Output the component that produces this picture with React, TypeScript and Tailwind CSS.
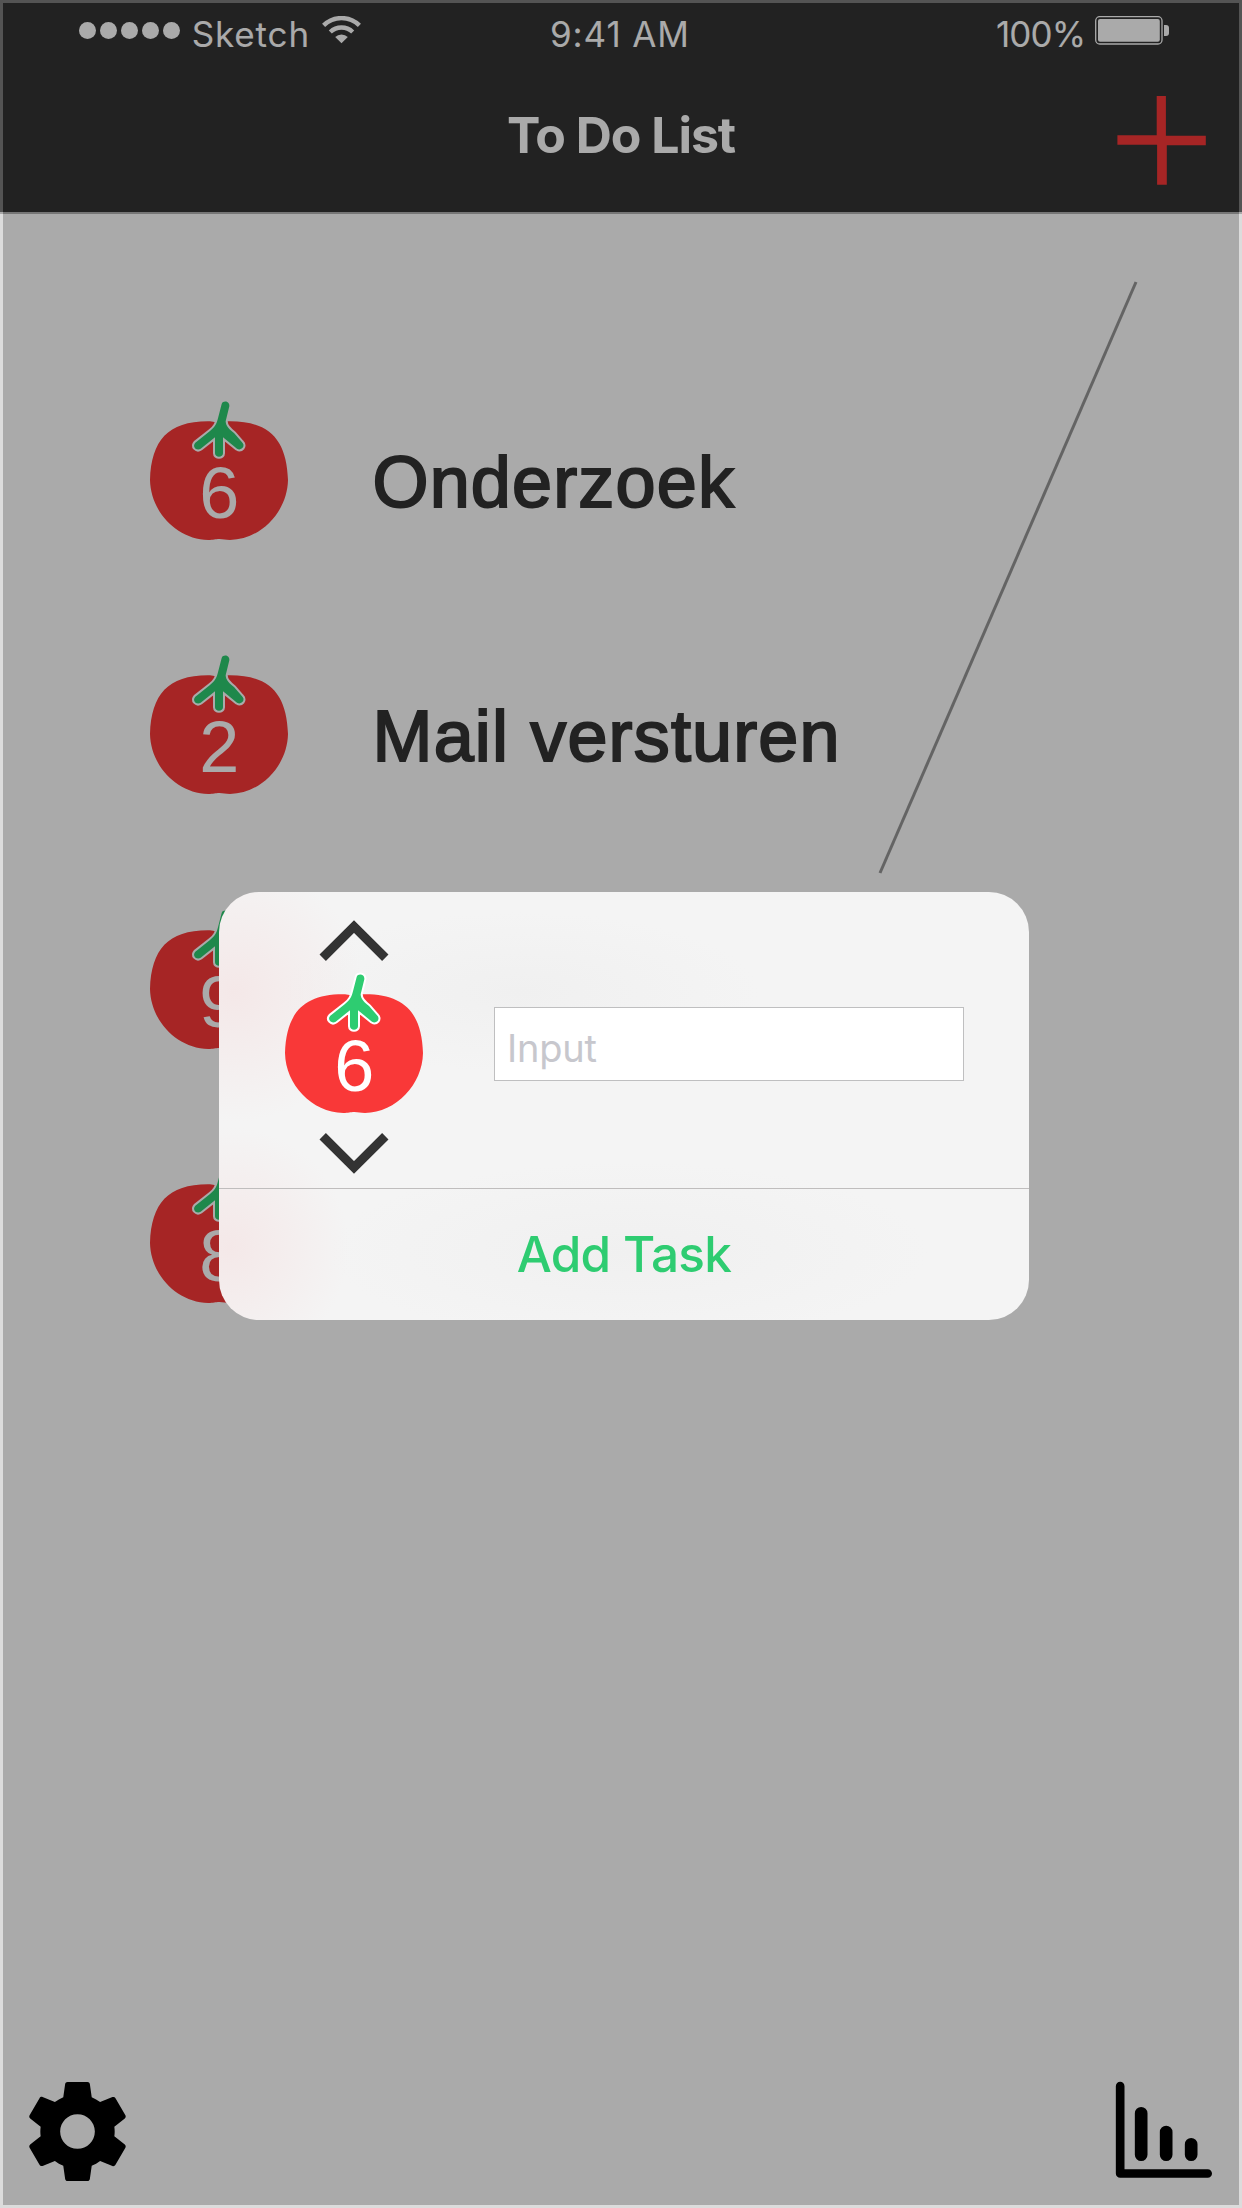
import React from "react";

const BODY =
  "M267 128 L240 124 C115 122 64 180 60 300 C62 395 140 478 235 480 C250 480 256 477 268 477 C280 477 286 480 300 480 C394 478 472 395 474 300 C470 180 419 122 294 124 Z";
const STEM =
  "M275 72 C279 60 300 63 298 79 L287 124 C287 139 300 150 312 159 L336 187 C348 198 334 214 321 206 L279 172 L279 220 C279 234 255 234 255 220 L255 172 L212 206 C200 214 185 200 196 188 L240 153 C257 140 260 130 264 115 Z";

function Tomato({ count, className = "" }: { count: number; className?: string }) {
  return (
    <svg viewBox="0 0 540 540" className={`size-[180px] shrink-0 ${className}`}>
      <path d={BODY} fill="#f93838" />
      <path d={STEM} fill="#2ecc71" stroke="#fff" strokeWidth="12" strokeLinejoin="round" className="[paint-order:stroke]" />
      <text x="268" y="414" textAnchor="middle" fontSize="216" fill="#fff" className="font-['Liberation_Sans',sans-serif]">
        {count}
      </text>
    </svg>
  );
}

function Chevron({ className = "" }: { className?: string }) {
  return (
    <svg viewBox="0 0 70 41" className={`h-[41px] w-[70px] shrink-0 ${className}`} fill="none" stroke="#333" strokeWidth="9">
      <path d="M3.7 37.8 L35 6.5 L66.3 37.8" />
    </svg>
  );
}

function StatusBar() {
  return (
    <div className="grid h-[68px] grid-cols-[550px_446px_1fr] text-[35px] leading-[68px] tracking-[0.9px] whitespace-nowrap text-white">
      <div className="flex pl-[79px]">
        <div className="mt-[22px] flex h-[17px] gap-[4.3px]">
          {[0, 1, 2, 3, 4].map((i) => (
            <span key={i} className="size-[16.7px] rounded-full bg-white" />
          ))}
        </div>
        <span className="ml-[12px]">Sketch</span>
        <svg viewBox="0 0 39 28" className="mt-[16px] ml-[12px] h-[28px] w-[39px]" fill="none" stroke="#fff" strokeWidth="4.4">
          <path d="M1.6 9.4 A25.5 25.5 0 0 1 37.4 9.4" />
          <path d="M8.3 16 A16.2 16.2 0 0 1 30.7 16" />
          <path d="M19.5 27.3 L13.2 21 A9 9 0 0 1 25.8 21 Z" fill="#fff" stroke="none" />
        </svg>
      </div>
      <span>9:41 AM</span>
      <div className="flex">
        <span className="w-[99px] tracking-[-0.9px]">100%</span>
        <svg viewBox="0 0 75 29" className="mt-[16px] h-[29px] w-[75px]">
          <rect x="0.7" y="0.7" width="66.3" height="27.3" rx="4" fill="none" stroke="#fff" strokeWidth="1.3" />
          <rect x="3" y="3" width="61.8" height="22.8" rx="2" fill="#fff" />
          <path d="M69 9 h2 q3 0 3 3 v5 q0 3 -3 3 h-2 Z" fill="#fff" />
        </svg>
      </div>
    </div>
  );
}

const tasks = [
  { count: 6, label: "Onderzoek" },
  { count: 2, label: "Mail versturen" },
  { count: 9, label: "" },
  { count: 8, label: "" },
];

export default function App() {
  return (
    <div className="relative flex h-[2208px] w-[1242px] flex-col overflow-hidden bg-white font-['Inter',sans-serif]">
      <header className="relative h-[214px] shrink-0 border-b-2 border-[#b2b2b2] bg-[#333]">
        <StatusBar />
        <h1 className="text-center text-[50px] leading-[134px] font-bold tracking-[-1.05px] text-white">To Do List</h1>
        <svg viewBox="0 0 90 90" className="absolute top-[96px] right-[35px] size-[90px]" fill="#f93838">
          <path d="M39.7 0 h9.2 v39.7 h39.9 v9.6 h-39 v39.5 h-9.7 v-40 H0.4 v-9.5 h39.3 Z" />
        </svg>
      </header>

      <ul className="flex flex-col gap-[74.4px] pt-[166px] pl-[130px]">
        {tasks.map((t) => (
          <li key={t.count} className="flex h-[180px] gap-[62.5px]">
            <Tomato count={t.count} />
            <span className="pt-6 font-['Liberation_Sans',sans-serif] text-[72px] leading-[156px] tracking-[1.15px] whitespace-nowrap text-[#333] [-webkit-text-stroke:2px_#333]">
              {t.label}
            </span>
          </li>
        ))}
      </ul>

      <svg viewBox="0 0 260 594" className="absolute top-[280px] left-[878px] h-[594px] w-[260px]" stroke="#979797" strokeWidth="3">
        <path d="M258 2 L2 593" />
      </svg>

      <footer className="mt-auto flex h-[158px] justify-between">
        <svg viewBox="0 0 24 24" className="mt-[22px] ml-[18px] size-[119px]">
          <path d="M19.43 12.98c.04-.32.07-.64.07-.98s-.03-.66-.07-.98l2.11-1.65c.19-.15.24-.42.12-.64l-2-3.46c-.12-.22-.39-.3-.61-.22l-2.49 1c-.52-.4-1.08-.73-1.69-.98l-.38-2.65C14.46 2.18 14.25 2 14 2h-4c-.25 0-.46.18-.49.42l-.38 2.65c-.61.25-1.17.59-1.69.98l-2.49-1c-.23-.09-.49 0-.61.22l-2 3.46c-.13.22-.07.49.12.64l2.11 1.65c-.04.32-.07.65-.07.98s.03.66.07.98l-2.11 1.65c-.19.15-.24.42-.12.64l2 3.46c.12.22.39.3.61.22l2.49-1c.52.4 1.08.73 1.69.98l.38 2.65c.03.24.24.42.49.42h4c.25 0 .46-.18.49-.42l.38-2.65c.61-.25 1.17-.59 1.69-.98l2.49 1c.23.09.49 0 .61-.22l2-3.46c.12-.22.07-.49-.12-.64l-2.11-1.65zM12 15.5c-1.93 0-3.5-1.57-3.5-3.5s1.57-3.5 3.5-3.5 3.5 1.57 3.5 3.5-1.57 3.5-3.5 3.5z" />
        </svg>
        <svg viewBox="0 0 456 474" className="h-[158px] w-[152px]" fill="none" stroke="#000" strokeLinecap="round" strokeLinejoin="round">
          <path d="M90.5 108.5 V370.5 H353" strokeWidth="26" />
          <path d="M153.5 190 V314 M228.5 246 V314 M303.5 283 V314" strokeWidth="38" />
        </svg>
      </footer>

      <div className="absolute inset-0 border-3 border-[#979797] bg-black opacity-33" />

      <div className="absolute top-[892px] left-[219px] flex h-[428px] w-[810px] flex-col overflow-hidden rounded-[40px] bg-[#f4f4f4] bg-[radial-gradient(circle_at_15px_100px,#f4e8e8_0,#f4e8e800_130px),radial-gradient(circle_at_10px_355px,#f4e8e8_0,#f4e8e800_120px),radial-gradient(ellipse_240px_80px_at_300px_100px,#f0f0f0_0,#f0f0f000_100%),radial-gradient(ellipse_300px_90px_at_410px_360px,#f0f0f0_0,#f0f0f000_100%)]">
        <div className="flex h-[297px] shrink-0 border-b border-[#bfbdbd]">
          <div className="ml-[46px] flex w-[180px] flex-col items-center pt-[28px]">
            <Chevron className="-ml-[3px]" />
            <Tomato count={6} className="-mt-[8px]" />
            <Chevron className="-ml-[3px] rotate-180" />
          </div>
          <input
            placeholder="Input"
            className="mt-[115px] ml-[49px] h-[74px] w-[470px] border border-[#bfbfc0] bg-white pt-[8px] pl-[12px] text-[38px] tracking-[-0.2px] placeholder:text-[#c7c7cd] placeholder:opacity-100"
          />
        </div>
        <button className="flex-1 text-[49.5px] leading-none font-medium tracking-[-0.7px] text-[#2ecc71]">Add Task</button>
      </div>
    </div>
  );
}
